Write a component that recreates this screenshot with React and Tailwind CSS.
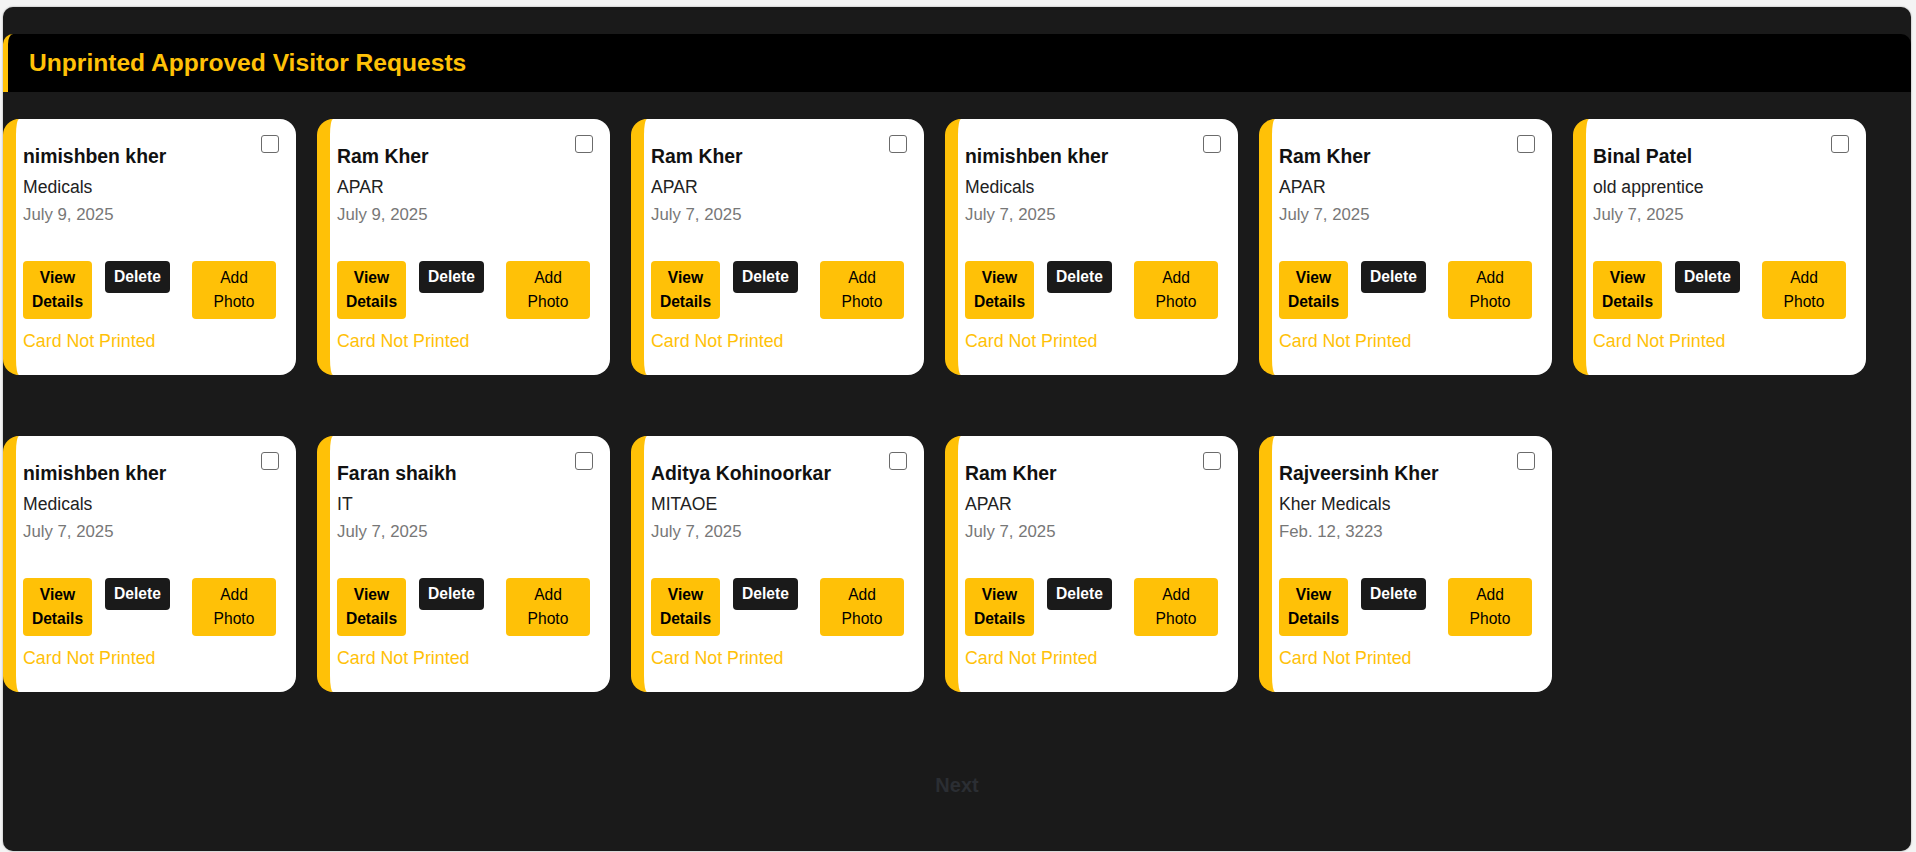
import React from 'react';

const requests = [
  { name: 'nimishben kher', company: 'Medicals', date: 'July 9, 2025' },
  { name: 'Ram Kher', company: 'APAR', date: 'July 9, 2025' },
  { name: 'Ram Kher', company: 'APAR', date: 'July 7, 2025' },
  { name: 'nimishben kher', company: 'Medicals', date: 'July 7, 2025' },
  { name: 'Ram Kher', company: 'APAR', date: 'July 7, 2025' },
  { name: 'Binal Patel', company: 'old apprentice', date: 'July 7, 2025' },
  { name: 'nimishben kher', company: 'Medicals', date: 'July 7, 2025' },
  { name: 'Faran shaikh', company: 'IT', date: 'July 7, 2025' },
  { name: 'Aditya Kohinoorkar', company: 'MITAOE', date: 'July 7, 2025' },
  { name: 'Ram Kher', company: 'APAR', date: 'July 7, 2025' },
  { name: 'Rajveersinh Kher', company: 'Kher Medicals', date: 'Feb. 12, 3223' },
];

function RequestCard({ name, company, date }) {
  return (
    <div className="relative w-[293px] bg-white rounded-[16px] border-l-[13px] border-[#ffc107] pl-[7px] pr-[20px] pt-[26px] pb-[24px]">
      {/* Select */}
      <input
        type="checkbox"
        className="absolute top-[16px] right-[17px] w-[18px] h-[18px] appearance-none rounded-[3px] border-[1.5px] border-[#6b6b6b] bg-white"
      />
      <div className="text-[19.4px] leading-[22px] font-bold text-[#111]">{name}</div>
      <div className="mt-[10px] text-[17.6px] leading-[20px] text-[#222]">{company}</div>
      <div className="mt-[8px] text-[16.8px] leading-[19px] text-[#777]">{date}</div>

      {/* Actions */}
      <div className="mt-[37px] flex items-start">
        <button className="w-[69px] py-[5px] rounded-[4px] bg-[#ffc107] text-[15.6px] leading-[24px] font-bold text-black text-center">
          View Details
        </button>
        <button className="ml-[13px] w-[65px] py-[4px] rounded-[4px] bg-[#1a1a1a] text-[15.6px] leading-[24px] font-bold text-white text-center">
          Delete
        </button>
        <button className="ml-[22px] w-[84px] py-[5px] px-[20px] rounded-[4px] bg-[#ffc107] text-[15.6px] leading-[24px] text-black text-center">
          Add Photo
        </button>
      </div>

      <div className="mt-[12px] text-[17.8px] leading-[20px] text-[#ffc107]">Card Not Printed</div>
    </div>
  );
}

export default function App() {
  return (
    <div
      className="min-h-screen bg-[#f4f4f4] pt-[7px] pl-[3px] pr-[5px] pb-[1px]"
      style={{ fontFamily: '"Liberation Sans", Arial, sans-serif' }}
    >
      <div className="min-h-[844px] bg-[#1a1a1a] rounded-[10px] shadow-[0_0_2px_rgba(0,0,0,0.4)] pt-[27px] flex flex-col">
        {/* Header */}
        <div className="h-[58px] flex items-center bg-black rounded-t-[10px] border-l-[5px] border-[#ffc107] pl-[21px]">
          <h2 className="text-[24.6px] font-bold text-[#ffc107]">Unprinted Approved Visitor Requests</h2>
        </div>

        {/* Cards */}
        <div className="mt-[27px] flex flex-wrap gap-x-[21px] gap-y-[61px]">
          {requests.map((r, i) => (
            <RequestCard key={i} {...r} />
          ))}
        </div>

        {/* Pagination */}
        <div className="mt-[82px] flex justify-center">
          <button className="text-[20px] leading-[23px] font-bold text-[#2b2e33]">Next</button>
        </div>
      </div>
    </div>
  );
}
